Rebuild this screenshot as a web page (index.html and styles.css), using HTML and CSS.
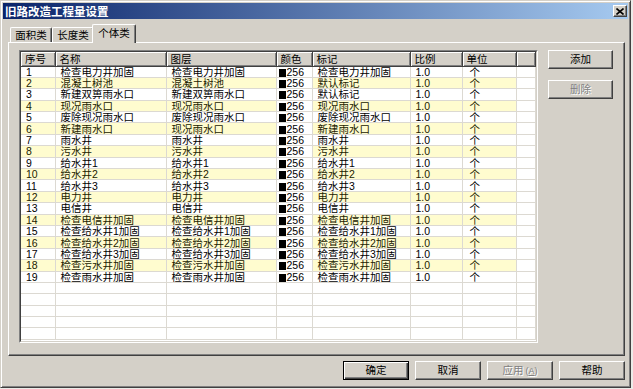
FILE: index.html
```html
<!DOCTYPE html>
<html lang="zh-CN">
<head>
<meta charset="utf-8">
<title>旧路改造工程量设置</title>
<link rel="stylesheet" href="styles.css">
</head>
<body>
<div class="win">
  <div class="titlebar">
    <span class="title">旧路改造工程量设置</span>
    <span class="close"><svg width="8" height="7" viewBox="0 0 8 7"><path d="M0.5 0.5 L7.5 6.5 M7.5 0.5 L0.5 6.5" stroke="#000" stroke-width="1.6" fill="none"/></svg></span>
  </div>
  <div class="content">
    <div class="tabs">
      <div class="tab t1">面积类</div>
      <div class="tab t2">长度类</div>
      <div class="tab active">个体类</div>
    </div>
    <div class="panel">
      <div class="list">
        <div class="list-in">
          <table class="grid">
            <colgroup>
              <col class="w1"><col class="w2"><col class="w3"><col class="w4"><col class="w5"><col class="w6"><col class="w7"><col>
            </colgroup>
            <thead>
              <tr><th>序号</th><th>名称</th><th>图层</th><th>颜色</th><th>标记</th><th>比例</th><th>单位</th><th></th></tr>
            </thead>
            <tbody>
              <tr><td>1</td><td>检查电力井加固</td><td>检查电力井加固</td><td class="c"><span class="sw"></span>256</td><td>检查电力井加固</td><td>1.0</td><td class="u">个</td><td></td></tr>
              <tr class="y"><td>2</td><td>混凝土树池</td><td>混凝土树池</td><td class="c"><span class="sw"></span>256</td><td>默认标记</td><td>1.0</td><td class="u">个</td><td></td></tr>
              <tr><td>3</td><td>新建双箅雨水口</td><td>新建双箅雨水口</td><td class="c"><span class="sw"></span>256</td><td>默认标记</td><td>1.0</td><td class="u">个</td><td></td></tr>
              <tr class="y"><td>4</td><td>现况雨水口</td><td>现况雨水口</td><td class="c"><span class="sw"></span>256</td><td>现况雨水口</td><td>1.0</td><td class="u">个</td><td></td></tr>
              <tr><td>5</td><td>废除现况雨水口</td><td>废除现况雨水口</td><td class="c"><span class="sw"></span>256</td><td>废除现况雨水口</td><td>1.0</td><td class="u">个</td><td></td></tr>
              <tr class="y"><td>6</td><td>新建雨水口</td><td>现况雨水口</td><td class="c"><span class="sw"></span>256</td><td>新建雨水口</td><td>1.0</td><td class="u">个</td><td></td></tr>
              <tr><td>7</td><td>雨水井</td><td>雨水井</td><td class="c"><span class="sw"></span>256</td><td>雨水井</td><td>1.0</td><td class="u">个</td><td></td></tr>
              <tr class="y"><td>8</td><td>污水井</td><td>污水井</td><td class="c"><span class="sw"></span>256</td><td>污水井</td><td>1.0</td><td class="u">个</td><td></td></tr>
              <tr><td>9</td><td>给水井1</td><td>给水井1</td><td class="c"><span class="sw"></span>256</td><td>给水井1</td><td>1.0</td><td class="u">个</td><td></td></tr>
              <tr class="y"><td>10</td><td>给水井2</td><td>给水井2</td><td class="c"><span class="sw"></span>256</td><td>给水井2</td><td>1.0</td><td class="u">个</td><td></td></tr>
              <tr><td>11</td><td>给水井3</td><td>给水井3</td><td class="c"><span class="sw"></span>256</td><td>给水井3</td><td>1.0</td><td class="u">个</td><td></td></tr>
              <tr class="y"><td>12</td><td>电力井</td><td>电力井</td><td class="c"><span class="sw"></span>256</td><td>电力井</td><td>1.0</td><td class="u">个</td><td></td></tr>
              <tr><td>13</td><td>电信井</td><td>电信井</td><td class="c"><span class="sw"></span>256</td><td>电信井</td><td>1.0</td><td class="u">个</td><td></td></tr>
              <tr class="y"><td>14</td><td>检查电信井加固</td><td>检查电信井加固</td><td class="c"><span class="sw"></span>256</td><td>检查电信井加固</td><td>1.0</td><td class="u">个</td><td></td></tr>
              <tr><td>15</td><td>检查给水井1加固</td><td>检查给水井1加固</td><td class="c"><span class="sw"></span>256</td><td>检查给水井1加固</td><td>1.0</td><td class="u">个</td><td></td></tr>
              <tr class="y"><td>16</td><td>检查给水井2加固</td><td>检查给水井2加固</td><td class="c"><span class="sw"></span>256</td><td>检查给水井2加固</td><td>1.0</td><td class="u">个</td><td></td></tr>
              <tr><td>17</td><td>检查给水井3加固</td><td>检查给水井3加固</td><td class="c"><span class="sw"></span>256</td><td>检查给水井3加固</td><td>1.0</td><td class="u">个</td><td></td></tr>
              <tr class="y"><td>18</td><td>检查污水井加固</td><td>检查污水井加固</td><td class="c"><span class="sw"></span>256</td><td>检查污水井加固</td><td>1.0</td><td class="u">个</td><td></td></tr>
              <tr><td>19</td><td>检查雨水井加固</td><td>检查雨水井加固</td><td class="c"><span class="sw"></span>256</td><td>检查雨水井加固</td><td>1.0</td><td class="u">个</td><td></td></tr>
              <tr><td></td><td></td><td></td><td></td><td></td><td></td><td></td><td></td></tr>
              <tr><td></td><td></td><td></td><td></td><td></td><td></td><td></td><td></td></tr>
              <tr><td></td><td></td><td></td><td></td><td></td><td></td><td></td><td></td></tr>
              <tr><td></td><td></td><td></td><td></td><td></td><td></td><td></td><td></td></tr>
              <tr><td></td><td></td><td></td><td></td><td></td><td></td><td></td><td></td></tr>
            </tbody>
          </table>
        </div>
      </div>
      <div class="side">
        <button class="btn sbtn">添加</button>
        <button class="btn sbtn" disabled>删除</button>
      </div>
    </div>
    <div class="footer">
      <button class="btn fbtn def">确定</button>
      <button class="btn fbtn">取消</button>
      <button class="btn fbtn" disabled>应用<span class="acc">(<u>A</u>)</span></button>
      <button class="btn fbtn">帮助</button>
    </div>
  </div>
</div>
</body>
</html>
```

FILE: styles.css
```css
* { box-sizing: border-box; }
html, body { margin: 0; padding: 0; }
body {
  width: 633px;
  height: 389px;
  overflow: hidden;
  background: #ecebe8;
  font-family: "Liberation Sans", "Noto Sans CJK SC", sans-serif;
  font-size: 10.5px;
  color: #000;
}
.win {
  width: 631px;
  height: 388px;
  background: #d4d0c8;
  border: 1px solid;
  border-color: #d4d0c8 #404040 #404040 #d4d0c8;
  box-shadow: inset 1px 1px #fff, inset -1px -1px #808080;
  padding: 2px;
  display: flex;
  flex-direction: column;
}
.titlebar {
  height: 16px;
  flex: none;
  background: linear-gradient(to right, #0a246a, #a6caf0);
  display: flex;
  align-items: center;
  justify-content: space-between;
  padding: 0 1px 0 2px;
}
.title {
  color: #fff;
  font-family: "Noto Sans CJK SC", sans-serif;
  font-weight: bold;
  font-size: 11.5px;
  line-height: 16px;
}
.close {
  width: 14px;
  height: 12px;
  background: #d4d0c8;
  border: 1px solid;
  border-color: #fff #404040 #404040 #fff;
  box-shadow: inset -1px -1px #808080;
  display: flex;
  align-items: center;
  justify-content: center;
}
.close svg { display: block; }
.content {
  flex: 1;
  display: flex;
  flex-direction: column;
  padding: 5px 3px 0 5px;
}
.tabs {
  height: 18px;
  flex: none;
  display: flex;
  align-items: flex-end;
  padding-left: 2px;
}
.tab {
  height: 15px;
  background: #d4d0c8;
  border-top: 1px solid #fff;
  border-left: 1px solid #fff;
  border-right: 1px solid #404040;
  box-shadow: inset -1px 0 #808080;
  border-radius: 2px 2px 0 0;
  line-height: 13px;
  text-align: center;
  font-family: "Noto Sans CJK SC", sans-serif;
}
.t1 { width: 42px; }
.t2 { width: 42px; }
.tab.active {
  width: 44px;
  height: 19px;
  margin: 0 -2px -1px -2px;
  position: relative;
  z-index: 1;
  line-height: 15px;
}
.panel {
  height: 314px;
  flex: none;
  display: flex;
  gap: 10px;
  border: 1px solid;
  border-color: #fff #404040 #404040 #fff;
  box-shadow: inset -1px -1px #808080;
  padding: 7px 11px 11px 10px;
}
.list {
  flex: 1;
  height: 293px;
  border: 1px solid;
  border-color: #808080 #fff #fff #808080;
}
.list-in {
  height: 100%;
  overflow: hidden;
  background: #fff;
  border: 1px solid;
  border-color: #404040 #d4d0c8 #d4d0c8 #404040;
}
.grid {
  width: 100%;
  table-layout: fixed;
  border-collapse: collapse;
}
.w1 { width: 34px; }
.w2 { width: 111px; }
.w3 { width: 110px; }
.w4 { width: 36px; }
.w5 { width: 98px; }
.w6 { width: 52px; }
.w7 { width: 54px; }
.grid th {
  height: 14px;
  padding: 0 0 0 4px;
  background: #d4d0c8;
  font-weight: normal;
  text-align: left;
  line-height: 12px;
  border-right: 1px solid #404040;
  border-bottom: 1px solid #404040;
  box-shadow: inset 1px 1px #fff, inset -1px -1px #808080;
  white-space: nowrap;
  overflow: hidden;
}
.grid tbody tr { height: 11.4px; }
.grid td {
  padding: 0 0 0 5px;
  line-height: 10px;
  white-space: nowrap;
  overflow: hidden;
  border-right: 1px solid #dcd9d2;
  border-bottom: 1px solid #dcd9d2;
  background: #fff;
}
.grid tr.y td { background: #fffccf; color: #222200; }
.grid tr.y td.c, .grid tr.y td:last-child { background: #fff; color: #000; }
.grid td.c { padding-left: 2px; }
.grid td.u { padding-left: 7px; }
.sw {
  display: inline-block;
  width: 7px;
  height: 8px;
  background: #000;
  margin-right: 1px;
  vertical-align: -1px;
}
.side {
  width: 65px;
  flex: none;
  display: flex;
  flex-direction: column;
  gap: 11px;
}
.btn {
  background: #d4d0c8;
  border: 1px solid;
  border-color: #fff #404040 #404040 #fff;
  box-shadow: inset -1px -1px #808080;
  font-family: "Liberation Sans", "Noto Sans CJK SC", sans-serif;
  font-size: 10.5px;
  color: #000;
  padding: 0;
  line-height: 15px;
}
.btn:disabled {
  color: #808080;
  text-shadow: 1px 1px #fff;
}
.sbtn { width: 65px; height: 19px; }
.footer {
  display: flex;
  justify-content: flex-end;
  gap: 6px;
  padding-top: 5px;
}
.fbtn { width: 66px; height: 19px; }
.btn.def {
  border: 1px solid #000;
  box-shadow: inset 1px 1px #fff, inset -1px -1px #404040, inset -2px -2px #808080;
}
.acc { font-size: 9px; margin-left: 2px; }
.acc u { text-decoration: underline; }
```
